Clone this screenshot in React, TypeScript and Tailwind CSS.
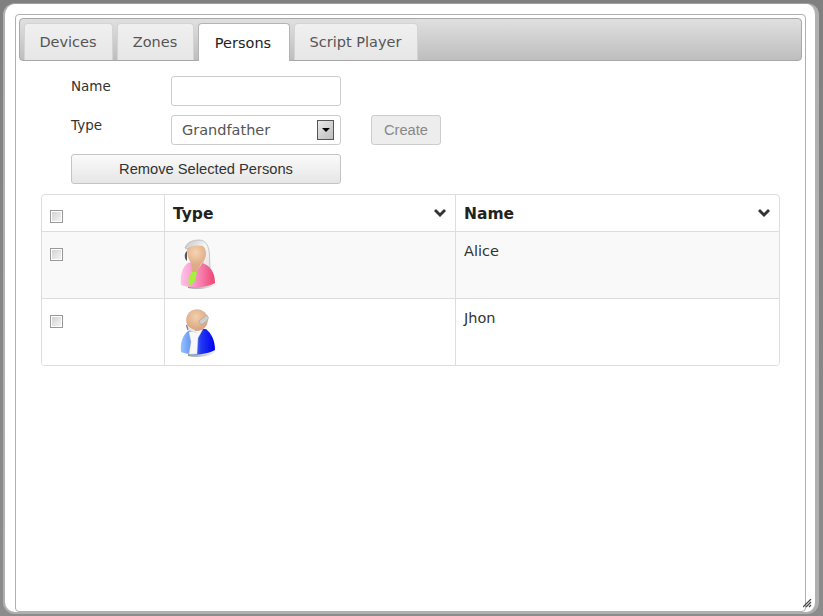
import type { ReactNode } from 'react';

const tabs = [
  { label: 'Devices', width: 'w-[89px]' },
  { label: 'Zones', width: 'w-[77px]' },
  { label: 'Persons', width: 'w-[92px]' },
  { label: 'Script Player', width: 'w-[124px]' },
];

const Check = () => (
  <span className="block w-[13px] h-[13px] border border-[#999] bg-linear-to-br from-[#cfcfcf] to-[#f8f8f8] outline outline-white -outline-offset-2" />
);

const Female = () => (
  <svg width="40" height="56" viewBox="10 3 40 56">
    <defs>
      <linearGradient id="fbody" x1="0" x2="1" y1="0" y2="0">
        <stop offset="0" stopColor="#ffc4e6" />
        <stop offset="0.4" stopColor="#f898c8" />
        <stop offset="1" stopColor="#ee4470" />
      </linearGradient>
      <radialGradient id="fface" cx="0.45" cy="0.35" r="0.8">
        <stop offset="0" stopColor="#f6d4b4" />
        <stop offset="1" stopColor="#d8a078" />
      </radialGradient>
      <linearGradient id="fhair" x1="0" x2="1" y1="0" y2="1">
        <stop offset="0" stopColor="#c4c4c4" />
        <stop offset="0.5" stopColor="#f6f6f6" />
        <stop offset="1" stopColor="#e4e4e4" />
      </linearGradient>
      <linearGradient id="fshade" x1="0" x2="1" y1="0" y2="0">
        <stop offset="0" stopColor="#888" stopOpacity="0.9" />
        <stop offset="1" stopColor="#888" stopOpacity="0" />
      </linearGradient>
    </defs>
    <path d="M18 51 C30 52 40 50 45 46 L47 49 C40 54 28 55 18 53 Z" fill="url(#fshade)" />
    <path d="M15 13 C17 7 23 5 29 5 C36 5 39 11 39.5 20 L40 33 L33 33 L33 14 L17 14 Z" fill="url(#fhair)" stroke="#aaa" strokeWidth="0.6" />
    <path d="M17 16 C14 18 14 24 17 26 Z" fill="#555" />
    <path d="M11 50 C10 41 12 32 18 28 L22 27 L27 36 L32 28 C39 30 45 36 45 48 C36 53 20 54 11 50 Z" fill="url(#fbody)" />
    <path d="M21 26 L32 26 L27 38 L22 38 Z" fill="#dfab84" />
    <path d="M21.5 37 L27 37 L25 46 L19 52 L18.5 44 Z" fill="#a8f040" />
    <path d="M17 14 C20 10 28 10 33 11 C36 14 36.5 18 35.5 22 C34 27 30 30.5 26.5 30.5 C21 30 17 24 17 14 Z" fill="url(#fface)" />
  </svg>
);

const Male = () => (
  <svg width="40" height="56" viewBox="10 3 40 56">
    <defs>
      <linearGradient id="mbody" x1="0" x2="1" y1="0" y2="0">
        <stop offset="0" stopColor="#98c4ff" />
        <stop offset="0.35" stopColor="#5a8cf4" />
        <stop offset="0.6" stopColor="#2038f0" />
        <stop offset="1" stopColor="#0000f0" />
      </linearGradient>
      <radialGradient id="mface" cx="0.45" cy="0.35" r="0.75">
        <stop offset="0" stopColor="#f2d0b0" />
        <stop offset="1" stopColor="#d49c74" />
      </radialGradient>
      <linearGradient id="mshade" x1="0" x2="1" y1="0" y2="0">
        <stop offset="0" stopColor="#888" stopOpacity="0.9" />
        <stop offset="1" stopColor="#888" stopOpacity="0" />
      </linearGradient>
    </defs>
    <path d="M18 52 C30 53 40 50 45 46 L47 49 C40 55 28 56 18 54 Z" fill="url(#mshade)" />
    <path d="M11 50 C10 42 12 34 18 29 L24 27 L36 27 C41 31 45 38 45 48 C36 53 20 54 11 50 Z" fill="url(#mbody)" />
    <path d="M19 30 L33 27 L28 36 L27 52 L19 52 L21 40 Z" fill="#f8f8f8" stroke="#ccc" strokeWidth="0.4" />
    <circle cx="27" cy="18" r="10.8" fill="url(#mface)" />
    <path d="M29 19 L37 13 L38.5 16 L37 19 L31 23 Z" fill="#cfcfcf" stroke="#999" strokeWidth="0.5" />
    <path d="M18 25 C19 29 23 26 26 31" fill="none" stroke="#e8e8e8" strokeWidth="2.4" />
    <path d="M16.5 23 L18 28" stroke="#777" strokeWidth="1.2" />
  </svg>
);

const Chevron = () => (
  <svg width="12" height="8" viewBox="0 0 12 8" className="-mt-[5px]">
    <path d="M0 2 L2 0 L6 4 L10 0 L12 2 L6 8 Z" fill="#333" />
  </svg>
);

const HeadCell = ({ children }: { children: ReactNode }) => (
  <div className="flex flex-1 items-center justify-between pl-2 pr-[9px] pt-[4px] font-bold text-[15.5px] text-[#222]">
    {children}
    <Chevron />
  </div>
);

export default function App() {
  return (
    <div className="w-[823px] h-[616px] bg-linear-to-b from-[#808080] to-[#8c8c8c] font-['DejaVu_Sans',sans-serif] overflow-hidden pl-[3px] pt-[3px]">
      <div className="w-[816px] h-[611px] rounded-[12px] border-l-2 border-r-[4px] border-b-[2px] border-t border-[#b0b0b0] border-t-[#a0a0a0] bg-white pt-[10px] pl-[10px]">
        <div className="relative w-[791px] h-[598px] rounded-[4px] border border-[#b0b0b0]">
          {/* tab bar */}
          <div className="mx-[3px] mt-[3px] h-[43px] rounded-[4px] border border-[#a8a8a8] bg-linear-to-b from-[#e0e0e0] to-[#bebebe] flex items-end pl-[4px] gap-[4px]">
            {tabs.map((t) => (
              <div
                key={t.label}
                className={
                  t.label === 'Persons'
                    ? `${t.width} h-[38px] -mb-px pt-[2px] pr-[2px] flex items-center justify-center bg-white border border-b-0 border-[#b4b4b4] rounded-t-[4px] text-[14.5px] text-[#222]`
                    : `${t.width} h-[37px] pt-[2px] pr-px flex items-center justify-center bg-linear-to-b from-[#f0f0f0] to-[#e6e6e6] border border-b-0 border-[#d4d4d4] rounded-t-[4px] text-[14.5px] text-[#555]`
                }
              >
                {t.label}
              </div>
            ))}
          </div>

          {/* form */}
          <div className="pl-[55px] pt-[15px]">
            <div className="flex items-start h-[39px]">
              <span className="w-[100px] text-[13.5px] text-[#333]">Name</span>
              <input className="w-[170px] h-[30px] bg-white border border-[#ccc] rounded-[3px]" />
            </div>
            <div className="flex items-start h-[39px]">
              <span className="w-[100px] text-[13.5px] text-[#333]">Type</span>
              <div className="w-[170px] h-[30px] bg-white border border-[#ccc] rounded-[3px] flex items-center justify-between pl-[10px] pr-[6px] text-[14.5px] text-[#555]">
                <span className="pt-[2px]">Grandfather</span>
                <span className="w-[17px] h-[20px] border border-[#555] bg-linear-to-br from-[#e8e8e8] to-[#bdbdbd] flex items-center justify-center">
                  <span className="w-0 h-0 border-x-[4px] border-x-transparent border-t-[4px] border-t-black" />
                </span>
              </div>
              <span className="ml-[30px] w-[70px] h-[30px] bg-[#ededed] border border-[#ccc] rounded-[3px] flex items-center justify-center font-['Liberation_Sans',sans-serif] text-[14.7px] text-[#888]">
                Create
              </span>
            </div>
            <button className="w-[270px] h-[30px] rounded-[3px] border border-[#c4c4c4] bg-linear-to-b from-[#fafafa] to-[#e6e6e6] font-['Liberation_Sans',sans-serif] text-[14.7px] text-[#333]">
              Remove Selected Persons
            </button>
          </div>

          {/* table */}
          <div className="ml-[25px] mt-[10px] w-[739px] rounded-[4px] border border-[#ddd] overflow-hidden">
            <div className="flex h-[37px] border-b border-[#ddd]">
              <div className="w-[123px] pl-2 pt-[15px] shrink-0 border-r border-[#ddd]"><Check /></div>
              <div className="w-[291px] shrink-0 flex border-r border-[#ddd]"><HeadCell>Type</HeadCell></div>
              <div className="flex-1 flex"><HeadCell>Name</HeadCell></div>
            </div>
            <div className="flex h-[67px] bg-[#f9f9f9] border-b border-[#ddd]">
              <div className="w-[123px] pl-2 pt-[16px] shrink-0 border-r border-[#ddd]"><Check /></div>
              <div className="w-[291px] pl-[15px] pt-[6px] shrink-0 border-r border-[#ddd]"><Female /></div>
              <div className="pl-2 pt-[9px] text-[14.5px] text-[#333] leading-[20px]">Alice</div>
            </div>
            <div className="flex h-[66px] bg-white">
              <div className="w-[123px] pl-2 pt-[16px] shrink-0 border-r border-[#ddd]"><Check /></div>
              <div className="w-[291px] pl-[15px] pt-[6px] shrink-0 border-r border-[#ddd]"><Male /></div>
              <div className="pl-2 pt-[9px] text-[14.5px] text-[#333] leading-[20px]">Jhon</div>
            </div>
          </div>

          {/* resize grip */}
          <svg className="absolute right-[-7px] bottom-[3px]" width="9" height="9" viewBox="0 0 9 9">
            <path d="M0 8 L8 0 M3 8 L8 3 M6 8 L8 6" stroke="#444" strokeWidth="1.2" />
          </svg>
        </div>
      </div>
    </div>
  );
}
